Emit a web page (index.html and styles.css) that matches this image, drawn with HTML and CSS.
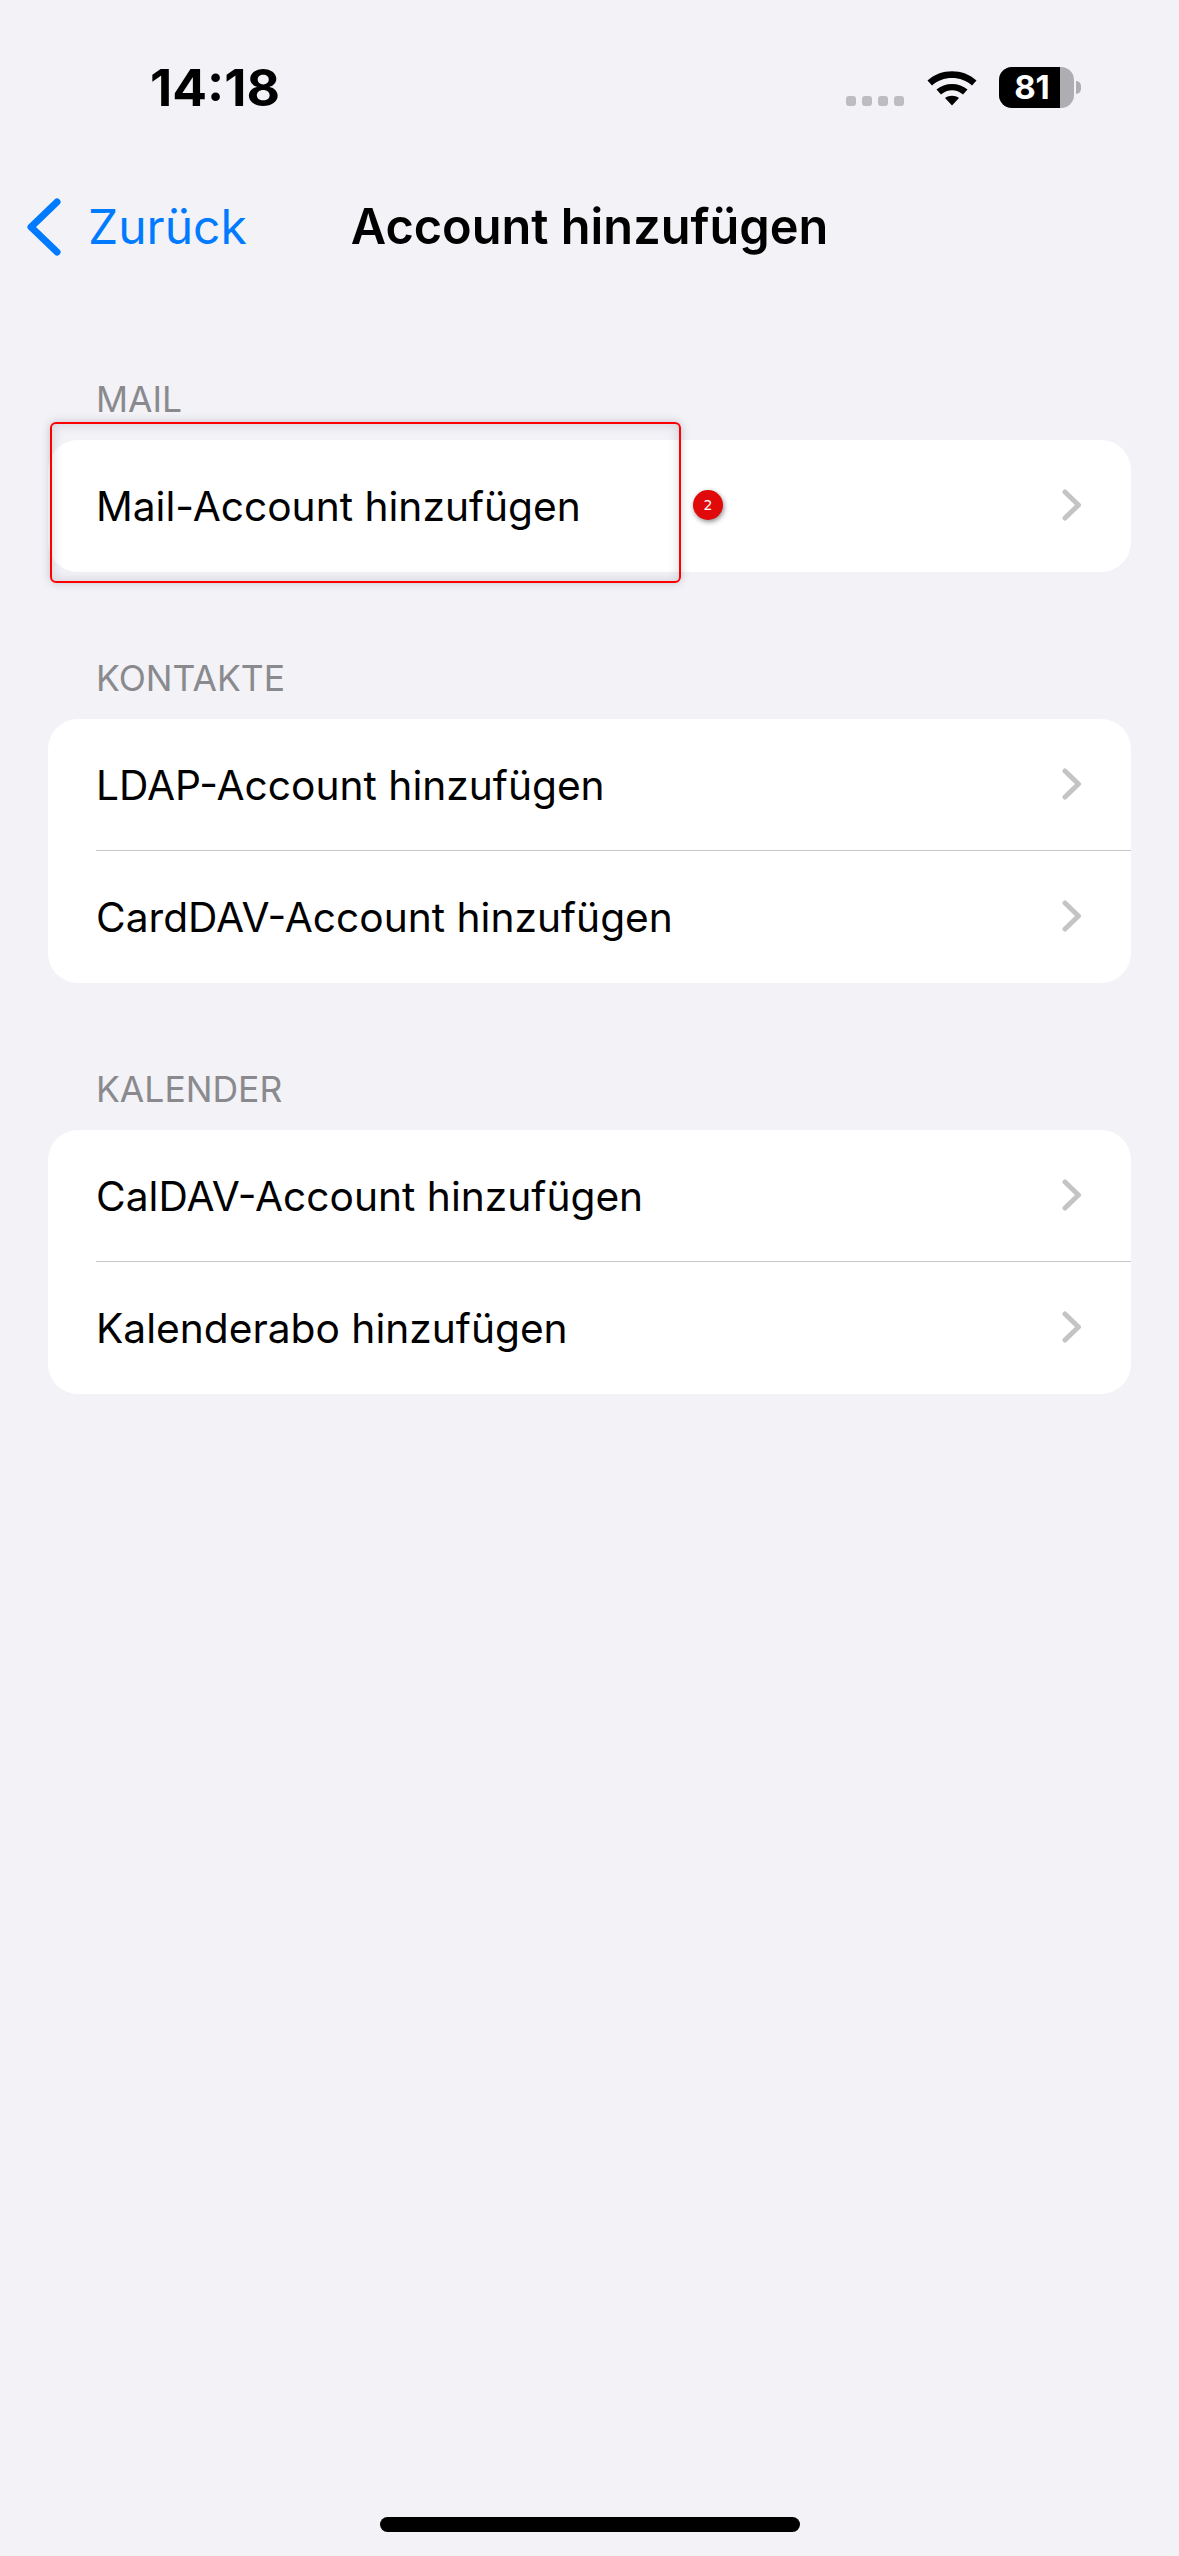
FILE: index.html
```html
<!DOCTYPE html>
<html lang="de">
<head>
    <meta charset="UTF-8">
    <title>Account hinzufügen</title>
    <link rel="stylesheet" href="styles.css">
</head>
<body>
    <div class="phone">
        <div class="status-bar">
            <span class="time">14:18</span>
            <div class="status-icons">
                <div class="signal"><i></i><i></i><i></i><i></i></div>
                <svg class="wifi" width="50" height="38" viewBox="0 0 50 38">
                    <path d="M0.5 12.5C13.5 0 36.5 0 49.5 12.5L45 17.5C34.5 7.5 15.500 7.500 5 17.500Z" fill="#000"/>
                    <path d="M9.500 21.500C17.500 14 32.500 14 40.500 21.500L36 26.500C29.500 20.800 20.500 20.800 14 26.500Z" fill="#000"/>
                    <path d="M18 30C22 27 28 27 32 30L25 37.500Z" fill="#000"/>
                </svg>
                <div class="battery">
                    <div class="battery-body"><span class="battery-fill"></span><span class="battery-level">81</span></div>
                    <span class="battery-cap"></span>
                </div>
            </div>
        </div>

        <div class="nav-bar">
            <a class="back">
                <svg width="36" height="58" viewBox="0 0 36 58">
                    <path d="M31 4L5 29L31 54" fill="none" stroke="#007aff" stroke-width="7" stroke-linecap="round" stroke-linejoin="round"/>
                </svg>
                <span>Zurück</span>
            </a>
            <h1>Account hinzufügen</h1>
        </div>

        <div class="group group-mail">
            <div class="group-title">MAIL</div>
            <div class="card">
                <div class="row">
                    <span>Mail-Account hinzufügen</span>
                    <svg class="chevron" width="20" height="32" viewBox="0 0 20 32"><path d="M3 3L16.500 16L3 29" fill="none" stroke="#c4c4c6" stroke-width="5" stroke-linecap="round" stroke-linejoin="round"/></svg>
                </div>
            </div>
            <div class="highlight"></div>
            <div class="marker">2</div>
        </div>

        <div class="group">
            <div class="group-title">KONTAKTE</div>
            <div class="card">
                <div class="row">
                    <span>LDAP-Account hinzufügen</span>
                    <svg class="chevron" width="20" height="32" viewBox="0 0 20 32"><path d="M3 3L16.500 16L3 29" fill="none" stroke="#c4c4c6" stroke-width="5" stroke-linecap="round" stroke-linejoin="round"/></svg>
                </div>
                <div class="row">
                    <span>CardDAV-Account hinzufügen</span>
                    <svg class="chevron" width="20" height="32" viewBox="0 0 20 32"><path d="M3 3L16.500 16L3 29" fill="none" stroke="#c4c4c6" stroke-width="5" stroke-linecap="round" stroke-linejoin="round"/></svg>
                </div>
            </div>
        </div>

        <div class="group">
            <div class="group-title">KALENDER</div>
            <div class="card">
                <div class="row">
                    <span>CalDAV-Account hinzufügen</span>
                    <svg class="chevron" width="20" height="32" viewBox="0 0 20 32"><path d="M3 3L16.500 16L3 29" fill="none" stroke="#c4c4c6" stroke-width="5" stroke-linecap="round" stroke-linejoin="round"/></svg>
                </div>
                <div class="row">
                    <span>Kalenderabo hinzufügen</span>
                    <svg class="chevron" width="20" height="32" viewBox="0 0 20 32"><path d="M3 3L16.500 16L3 29" fill="none" stroke="#c4c4c6" stroke-width="5" stroke-linecap="round" stroke-linejoin="round"/></svg>
                </div>
            </div>
        </div>

        <div class="home-indicator"></div>
    </div>
</body>
</html>
```

FILE: styles.css
```css
* {
    box-sizing: border-box;
}

body {
    margin: 0;
    background-color: #F2F2F7;
    color: #000;
    font-family: 'Inter', 'Liberation Sans', sans-serif;
}

.phone {
    position: relative;
    width: 1179px;
    height: 2556px;
    overflow: hidden;
    background-color: #F2F2F7;
}

/* Status bar */
.status-bar {
    display: flex;
    justify-content: space-between;
    align-items: center;
    height: 174px;
    padding: 0 98px 0 150px;
}

.time {
    font-size: 51.5px;
    font-weight: 700;
}

.status-icons {
    display: flex;
    align-items: center;
}

.signal {
    display: flex;
    gap: 6px;
    margin-right: 23px;
    padding-top: 28px;
}

.signal i {
    width: 10px;
    height: 10px;
    border-radius: 3px;
    background-color: #BDBDC1;
}

.wifi {
    margin-right: 22px;
}

.battery {
    display: flex;
    align-items: center;
}

.battery-body {
    position: relative;
    display: flex;
    justify-content: center;
    align-items: center;
    width: 75px;
    height: 41px;
    border-radius: 13px;
    overflow: hidden;
    background-color: #AEAEB2;
}

.battery-fill {
    position: absolute;
    left: 0;
    top: 0;
    bottom: 0;
    width: 81%;
    background-color: #000;
}

.battery-level {
    position: relative;
    margin-right: 9px;
    color: #fff;
    font-size: 33px;
    font-weight: 700;
}

.battery-cap {
    width: 5px;
    height: 13px;
    margin-left: 2px;
    border-radius: 0 6px 6px 0;
    background-color: #AEAEB2;
}

/* Navigation */
.nav-bar {
    position: relative;
    display: flex;
    justify-content: center;
    align-items: center;
    height: 106px;
    padding-bottom: 2px;
}

.nav-bar h1 {
    margin: 0;
    font-size: 48.7px;
    font-weight: 600;
}

.back {
    position: absolute;
    left: 26px;
    top: 23px;
    display: flex;
    align-items: center;
    gap: 26px;
    color: #007AFF;
    font-size: 48px;
}

/* Groups */
.group {
    position: relative;
    margin: 0 48px 86px;
}

.group-mail {
    margin-top: 99px;
}

.group-title {
    height: 61px;
    padding: 0 0 0 48px;
    color: #8A8A8E;
    font-size: 35.5px;
    line-height: 42px;
}

.card {
    border-radius: 30px;
    background-color: #fff;
}

.row {
    display: flex;
    justify-content: space-between;
    align-items: center;
    height: 132px;
    margin-left: 48px;
    padding-right: 49px;
    font-size: 40.7px;
}

.row + .row {
    height: 133px;
    margin-top: -1px;
    border-top: 1px solid #C6C6C8;
}

.chevron {
    margin-top: -2px;
}

/* Annotation drawn on top of the screenshot */
.highlight {
    position: absolute;
    left: 2px;
    top: 43px;
    width: 631px;
    height: 161px;
    border: 2px solid #F00;
    border-radius: 6px;
    box-shadow: 0 0 8px rgba(60, 60, 80, 0.25), inset 0 0 12px rgba(60, 60, 80, 0.2);
}

.marker {
    position: absolute;
    left: 645px;
    top: 111px;
    display: flex;
    justify-content: center;
    align-items: center;
    width: 30px;
    height: 30px;
    border-radius: 50%;
    background-color: #E10A0A;
    box-shadow: 1px 2px 5px rgba(0, 0, 0, 0.45);
    color: #fff;
    font-family: 'DejaVu Sans', sans-serif;
    font-size: 14px;
}

.home-indicator {
    position: absolute;
    left: 380px;
    bottom: 24px;
    width: 420px;
    height: 15px;
    border-radius: 8px;
    background-color: #000;
}
```
